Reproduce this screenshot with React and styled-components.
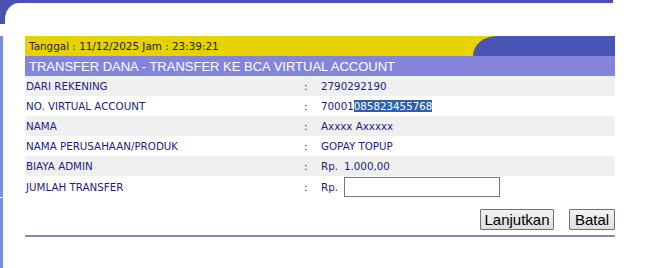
import React from "react";
import styled, { createGlobalStyle } from "styled-components";

const Global = createGlobalStyle`
  html, body { margin: 0; padding: 0; background: #ffffff; }
  body { font-family: "DejaVu Sans", Verdana, sans-serif; }
  #root { min-height: 100vh; display: flex; flex-direction: column; }
`;

const Page = styled.div`
  flex: 1;
  display: flex;
  flex-direction: column;
  min-height: 100vh;
`;

const TopFrame = styled.div`
  width: 613px;
  height: 24px;
  background: #4b51b1;
  display: flex;
  flex-shrink: 0;
`;

const TopInner = styled.div`
  flex: 1;
  margin: 3px 0 0 5px;
  background: #ffffff;
  border-top-left-radius: 14px 16px;
`;

const BodyRow = styled.div`
  flex: 1;
  display: flex;
  margin-top: 12px;
`;

const SideStrip = styled.div`
  width: 3px;
  flex-shrink: 0;
  background: linear-gradient(
    to bottom,
    #7391e0 0,
    #7391e0 161px,
    #ffffff 161px,
    #ffffff 162px,
    #7391e0 162px
  );
`;

const Panel = styled.div`
  width: 590px;
  margin-left: 22px;
  display: flex;
  flex-direction: column;
`;

const DateBar = styled.div`
  height: 20px;
  background: #e6d200;
  display: flex;
  align-items: center;
  justify-content: space-between;
  overflow: hidden;
`;

const DateText = styled.span`
  padding-left: 4px;
  font-size: 10.4px;
  color: #1e1e1e;
`;

const DateCurve = styled.div`
  width: 142px;
  height: 20px;
  background: #4a55b5;
  border-top-left-radius: 24px 20px;
`;

const TitleBar = styled.div`
  height: 20px;
  background: #8484dc;
  color: #ffffff;
  font-family: "Liberation Sans", Arial, sans-serif;
  font-size: 13px;
  display: flex;
  align-items: center;
  padding-left: 4px;
`;

const Row = styled.div`
  display: grid;
  grid-template-columns: 275px 21px 1fr;
  align-items: center;
  height: ${(p) => (p.$tall ? "21px" : "20px")};
  background: ${(p) => (p.$alt ? "#efefef" : "#ffffff")};
  font-size: 10.3px;
  color: #1c1c84;
`;

const Label = styled.span`
  padding-left: 1px;
`;

const Colon = styled.span`
  padding-left: 4px;
`;

const Value = styled.span`
  display: flex;
  align-items: center;
  gap: 6px;
  white-space: pre;
`;

const Selected = styled.span`
  background: #2c61ab;
  color: #ffffff;
`;

const AmountInput = styled.input`
  box-sizing: border-box;
  width: 156px;
  height: 20px;
  margin: 0;
  border: 1px solid #767676;
  background: #ffffff;
  align-self: flex-start;
`;

const Actions = styled.div`
  display: flex;
  justify-content: flex-end;
  gap: 15px;
  margin-top: 12px;
`;

const Button = styled.button`
  box-sizing: border-box;
  height: 21px;
  width: ${(p) => p.$w}px;
  padding: 0;
  margin: 0;
  font-family: "Liberation Sans", Arial, sans-serif;
  font-size: 15px;
  color: #000000;
  background: linear-gradient(to bottom, #f2f2f2, #dedede);
  border: 1px solid #707070;
  border-radius: 1px;
  line-height: 19px;
`;

const Rule = styled.div`
  height: 2px;
  margin-top: 5px;
  background: #8787b6;
`;

const rows = [
  { label: "DARI REKENING", value: "2790292190", alt: true },
  {
    label: "NO. VIRTUAL ACCOUNT",
    value: (
      <span>
        70001<Selected>085823455768</Selected>
      </span>
    ),
  },
  { label: "NAMA", value: "Axxxx Axxxxx", alt: true },
  { label: "NAMA PERUSAHAAN/PRODUK", value: "GOPAY TOPUP" },
  {
    label: "BIAYA ADMIN",
    value: (
      <>
        <span>Rp.</span>
        <span>1.000,00</span>
      </>
    ),
    alt: true,
  },
];

export default function App() {
  return (
    <>
      <Global />
      <Page>
        <TopFrame>
          <TopInner />
        </TopFrame>
        <BodyRow>
          <SideStrip />
          <Panel>
            <DateBar>
              <DateText>Tanggal : 11/12/2025 Jam : 23:39:21</DateText>
              <DateCurve />
            </DateBar>
            <TitleBar>TRANSFER DANA - TRANSFER KE BCA VIRTUAL ACCOUNT</TitleBar>
            {rows.map((r) => (
              <Row key={r.label} $alt={r.alt}>
                <Label>{r.label}</Label>
                <Colon>:</Colon>
                <Value>{r.value}</Value>
              </Row>
            ))}
            <Row $tall>
              <Label>JUMLAH TRANSFER</Label>
              <Colon>:</Colon>
              <Value>
                <span>Rp.</span>
                <AmountInput type="text" />
              </Value>
            </Row>
            <Actions>
              <Button $w={74}>Lanjutkan</Button>
              <Button $w={46}>Batal</Button>
            </Actions>
            <Rule />
          </Panel>
        </BodyRow>
      </Page>
    </>
  );
}
